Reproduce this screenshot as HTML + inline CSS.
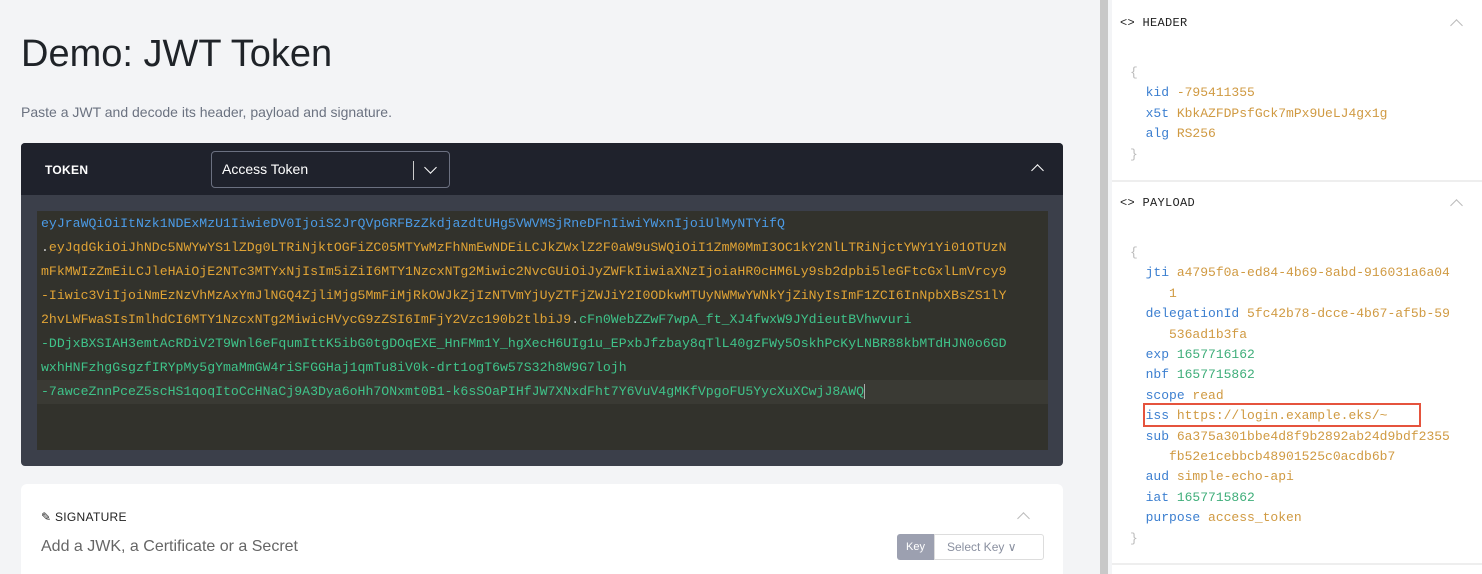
<!DOCTYPE html>
<html><head><style>
*{box-sizing:border-box;margin:0;padding:0}
html,body{width:1482px;height:574px;overflow:hidden}
body{background:#f3f4f6;font-family:"Liberation Sans",sans-serif;position:relative}
.mono{font-family:"Liberation Mono",monospace}
h1{position:absolute;left:21px;top:33px;font-size:38px;font-weight:400;color:#1f2328}
.sub{position:absolute;left:21px;top:104px;font-size:14px;color:#6b7280}
.tok{position:absolute;left:21px;top:143px;width:1042px;height:323px;background:#3b3f4a;border-radius:4px;overflow:hidden}
.tokh{height:52px;background:#1f222c;position:relative}
.tokh .lbl{position:absolute;left:24px;top:20px;color:#fff;font-size:12px;font-weight:700;letter-spacing:.3px}
.sel{position:absolute;left:190px;top:8px;width:239px;height:37px;border:1px solid #6b7080;border-radius:4px;color:#fff;font-size:14px;padding:9px 10px}
.sel .bar{position:absolute;left:201px;top:9px;width:1px;height:19px;background:#ccc}
.area{position:absolute;left:16px;top:68px;width:1011px;height:239px;background:#32322c;padding-top:1px}
.area div{white-space:pre;font-size:13.2px;line-height:24px;height:24px;padding-left:4px;color:#e0a335}
.area .b{color:#4b9be6}.area .g,.g{color:#3fc38a}.w{color:#ccc}
.sig{position:absolute;left:21px;top:484px;width:1042px;height:100px;background:#fff;border-radius:6px}
.scroll{position:absolute;left:1100px;top:0;width:8px;height:574px;background:#c8c8c8}
.right{position:absolute;left:1112px;top:0;width:370px;height:574px;background:#fff}
.sec{position:absolute;left:1120px;font-size:12px;color:#222;letter-spacing:.3px}
.js{position:absolute;left:1130px;font-size:13px;line-height:20.4px;white-space:pre;color:#d09a42}
.js .k{color:#3c7fd0}.js .n{color:#3fae7a}.js .p{color:#bbb}
.chev{position:absolute;width:9px;height:9px;border-left:1.5px solid #bbb;border-top:1.5px solid #bbb;transform:rotate(45deg)}
</style></head><body>
<h1>Demo: JWT Token</h1>
<div class="sub">Paste a JWT and decode its header, payload and signature.</div>
<div class="tok">
 <div class="tokh"><div class="lbl">TOKEN</div>
  <div class="sel">Access Token<div class="bar"></div><div class="chev" style="left:214px;top:11px;border-color:#fff;transform:rotate(225deg)"></div></div>
  <div class="chev" style="left:1012px;top:23px;border-color:#fff"></div>
 </div>
 <div class="area mono">
<div class="b">eyJraWQiOiItNzk1NDExMzU1IiwieDV0IjoiS2JrQVpGRFBzZkdjazdtUHg5VWVMSjRneDFnIiwiYWxnIjoiUlMyNTYifQ</div>
<div><span class="w">.</span>eyJqdGkiOiJhNDc5NWYwYS1lZDg0LTRiNjktOGFiZC05MTYwMzFhNmEwNDEiLCJkZWxlZ2F0aW9uSWQiOiI1ZmM0MmI3OC1kY2NlLTRiNjctYWY1Yi01OTUzN</div>
<div>mFkMWIzZmEiLCJleHAiOjE2NTc3MTYxNjIsIm5iZiI6MTY1NzcxNTg2Miwic2NvcGUiOiJyZWFkIiwiaXNzIjoiaHR0cHM6Ly9sb2dpbi5leGFtcGxlLmVrcy9</div>
<div>-Iiwic3ViIjoiNmEzNzVhMzAxYmJlNGQ4ZjliMjg5MmFiMjRkOWJkZjIzNTVmYjUyZTFjZWJiY2I0ODkwMTUyNWMwYWNkYjZiNyIsImF1ZCI6InNpbXBsZS1lY</div>
<div>2hvLWFwaSIsImlhdCI6MTY1NzcxNTg2MiwicHVycG9zZSI6ImFjY2Vzc190b2tlbiJ9<span class="w">.</span><span class="g">cFn0WebZZwF7wpA_ft_XJ4fwxW9JYdieutBVhwvuri</span></div>
<div class="g">-DDjxBXSIAH3emtAcRDiV2T9Wnl6eFqumIttK5ibG0tgDOqEXE_HnFMm1Y_hgXecH6UIg1u_EPxbJfzbay8qTlL40gzFWy5OskhPcKyLNBR88kbMTdHJN0o6GD</div>
<div class="g">wxhHNFzhgGsgzfIRYpMy5gYmaMmGW4riSFGGHaj1qmTu8iV0k-drt1ogT6w57S32h8W9G7lojh</div>
<div class="g" style="background:#3a3a34">-7awceZnnPceZ5scHS1qoqItoCcHNaCj9A3Dya6oHh7ONxmt0B1-k6sSOaPIHfJW7XNxdFht7Y6VuV4gMKfVpgoFU5YycXuXCwjJ8AWQ<span style="border-right:1px solid #aaa"></span></div>
 </div>
</div>
<div class="sig">
 <div style="position:absolute;left:20px;top:26px;font-size:12px;color:#222;letter-spacing:.3px">✎ SIGNATURE</div>
 <div class="chev" style="left:998px;top:30px"></div>
 <div style="position:absolute;left:20px;top:54px;font-size:16px;color:#666">Add a JWK, a Certificate or a Secret</div>
 <div style="position:absolute;left:876px;top:50px;width:37px;height:26px;background:#9ca0b0;color:#fff;font-size:11px;text-align:center;line-height:26px;border-radius:3px 0 0 3px">Key</div>
 <div style="position:absolute;left:913px;top:50px;width:110px;height:26px;border:1px solid #ddd;color:#8a90a0;font-size:12px;line-height:24px;padding-left:12px;border-radius:0 3px 3px 0">Select Key ∨</div>
</div>
<div class="scroll"></div>
<div class="right">
 <div style="position:absolute;left:0;top:180px;width:370px;height:2px;background:#eee"></div>
 <div style="position:absolute;left:0;top:563px;width:370px;height:2px;background:#eee"></div>
</div>
<div class="sec mono" style="top:16px">&lt;&gt; HEADER</div>
<div class="chev" style="left:1452px;top:21px"></div>
<div class="js mono" style="top:63px"><span class="p">{</span>
  <span class="k">kid</span> -795411355
  <span class="k">x5t</span> KbkAZFDPsfGck7mPx9UeLJ4gx1g
  <span class="k">alg</span> RS256
<span class="p">}</span></div>
<div class="sec mono" style="top:196px">&lt;&gt; PAYLOAD</div>
<div class="chev" style="left:1452px;top:201px"></div>
<div class="js mono" style="top:243px"><span class="p">{</span>
  <span class="k">jti</span> a4795f0a-ed84-4b69-8abd-916031a6a04
     1
  <span class="k">delegationId</span> 5fc42b78-dcce-4b67-af5b-59
     536ad1b3fa
  <span class="k">exp</span> <span class="n">1657716162</span>
  <span class="k">nbf</span> <span class="n">1657715862</span>
  <span class="k">scope</span> read
  <span class="k">iss</span> https://login.example.eks/~
  <span class="k">sub</span> 6a375a301bbe4d8f9b2892ab24d9bdf2355
     fb52e1cebbcb48901525c0acdb6b7
  <span class="k">aud</span> simple-echo-api
  <span class="k">iat</span> <span class="n">1657715862</span>
  <span class="k">purpose</span> access_token
<span class="p">}</span></div>
<div style="position:absolute;left:1143px;top:403px;width:278px;height:24px;border:2px solid #e5533d"></div>
</body></html>
